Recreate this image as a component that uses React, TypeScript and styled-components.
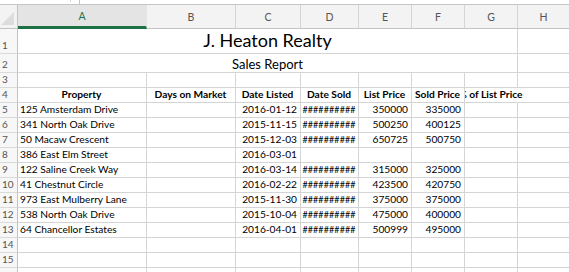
import styled, { createGlobalStyle } from 'styled-components';

const GlobalStyle = createGlobalStyle`
  html, body {
    margin: 0;
    padding: 0;
    background: #ffffff;
    overflow: hidden;
  }
  body {
    font-family: Lato, 'Liberation Sans', sans-serif;
  }
`;

const COLS = ['A', 'B', 'C', 'D', 'E', 'F', 'G', 'H'];

type Row = {
  property: string;
  listed: string;
  sold: boolean;
  listPrice: string;
  soldPrice: string;
};

const rows: Row[] = [
  { property: '125 Amsterdam Drive', listed: '2016-01-12', sold: true, listPrice: '350000', soldPrice: '335000' },
  { property: '341 North Oak Drive', listed: '2015-11-15', sold: true, listPrice: '500250', soldPrice: '400125' },
  { property: '50 Macaw Crescent', listed: '2015-12-03', sold: true, listPrice: '650725', soldPrice: '500750' },
  { property: '386 East Elm Street', listed: '2016-03-01', sold: false, listPrice: '', soldPrice: '' },
  { property: '122 Saline Creek Way', listed: '2016-03-14', sold: true, listPrice: '315000', soldPrice: '325000' },
  { property: '41 Chestnut Circle', listed: '2016-02-22', sold: true, listPrice: '423500', soldPrice: '420750' },
  { property: '973 East Mulberry Lane', listed: '2015-11-30', sold: true, listPrice: '375000', soldPrice: '375000' },
  { property: '538 North Oak Drive', listed: '2015-10-04', sold: true, listPrice: '475000', soldPrice: '400000' },
  { property: '64 Chancellor Estates', listed: '2016-04-01', sold: true, listPrice: '500999', soldPrice: '495000' },
];

function App() {
  return (
    <>
      <GlobalStyle />
      <Page>
        <FormulaStrip>
          <StripTick />
          <StripDivider />
        </FormulaStrip>
        <Sheet>
          {/* column headers */}
          <Corner>
            <CornerTriangle />
          </Corner>
          {COLS.map((c) => (
            <ColHeader key={c} $active={c === 'A'}>
              {c}
            </ColHeader>
          ))}
          <ColHeader />

          {/* row 1 */}
          <RowNum>1</RowNum>
          <Merged $size={18}>J. Heaton Realty</Merged>
          <Cell />
          <Cell />

          {/* row 2 */}
          <RowNum>2</RowNum>
          <Merged $size={13}>Sales Report</Merged>
          <Cell />
          <Cell />

          {/* row 3 */}
          <RowNum>3</RowNum>
          {COLS.map((c) => (
            <Cell key={c} />
          ))}
          <Cell />

          {/* row 4 */}
          <RowNum>4</RowNum>
          <Cell $bold $align="center">Property</Cell>
          <Cell $bold $align="center">Days on Market</Cell>
          <Cell $bold $align="center">Date Listed</Cell>
          <Cell $bold $align="center">Date Sold</Cell>
          <Cell $bold $align="center">List Price</Cell>
          <Cell $bold $align="center">Sold Price</Cell>
          <Cell $bold $align="center" $spill>
            % of List Price
          </Cell>
          <Cell />
          <Cell />

          {rows.map((r, i) => (
            <DataRow key={r.property} n={i + 5} row={r} />
          ))}

          {[14, 15].map((n) => (
            <Blank key={n} n={String(n)} />
          ))}
          <Blank n="" />
        </Sheet>
      </Page>
    </>
  );
}

function DataRow({ n, row }: { n: number; row: Row }) {
  return (
    <>
      <RowNum>{n}</RowNum>
      <Cell $align="left">{row.property}</Cell>
      <Cell />
      <Cell $align="right">{row.listed}</Cell>
      <Cell $align="center" $hash>
        {row.sold ? '##########' : ''}
      </Cell>
      <Cell $align="right">{row.listPrice}</Cell>
      <Cell $align="right">{row.soldPrice}</Cell>
      <Cell />
      <Cell />
      <Cell />
    </>
  );
}

function Blank({ n }: { n: string }) {
  return (
    <>
      <RowNum>{n}</RowNum>
      {COLS.map((c) => (
        <Cell key={c} />
      ))}
      <Cell />
    </>
  );
}

export default App;

const Page = styled.div`
  width: 569px;
  height: 272px;
  overflow: hidden;
  background: #ffffff;
`;

const FormulaStrip = styled.div`
  position: relative;
  height: 4px;
  border-bottom: 1px solid #c6c6c6;
  background: #ffffff;
`;

const StripDivider = styled.div`
  position: absolute;
  left: 79px;
  top: 0;
  width: 1px;
  height: 4px;
  background: #c6c6c6;
`;

const StripTick = styled.div`
  position: absolute;
  left: 70px;
  top: 0;
  width: 1px;
  height: 2px;
  background: #d8d8d8;
`;

const Sheet = styled.div`
  display: grid;
  grid-template-columns: 18px 129px 89px 65px 58px 53px 53px 53px 52px 40px;
  grid-template-rows: 24px 25px 19px 15px repeat(13, 15px);
  width: 610px;
`;

const Corner = styled.div`
  position: relative;
  background: #f3f3f3;
  border-right: 1px solid #c2c2c2;
  border-bottom: 1px solid #c2c2c2;
`;

const CornerTriangle = styled.div`
  position: absolute;
  right: 3px;
  bottom: 3px;
  width: 0;
  height: 0;
  border-left: 13px solid transparent;
  border-bottom: 13px solid #dcdcdc;
`;

const ColHeader = styled.div<{ $active?: boolean }>`
  display: flex;
  align-items: center;
  justify-content: center;
  box-sizing: border-box;
  padding-top: 1px;
  font-family: Lato, 'Liberation Sans', sans-serif;
  font-size: 10.5px;
  color: ${(p) => (p.$active ? '#217346' : '#555555')};
  background: ${(p) => (p.$active ? '#e4e4e4' : '#f3f3f3')};
  border-right: 1px solid ${(p) => (p.$active ? '#e4e4e4' : '#d5d5d5')};
  border-bottom: ${(p) => (p.$active ? '3px solid #1e7145' : '1px solid #c2c2c2')};
`;

const RowNum = styled.div`
  display: flex;
  align-items: flex-end;
  padding-left: 2px;
  padding-bottom: 1px;
  box-sizing: border-box;
  font-family: Lato, 'Liberation Sans', sans-serif;
  font-size: 10px;
  line-height: 13px;
  color: #555555;
  background: #f7f7f7;
  border-right: 1px solid #c2c2c2;
  border-bottom: 1px solid #dadada;
`;

const Merged = styled.div<{ $size: number }>`
  grid-column: span 7;
  display: flex;
  align-items: flex-end;
  justify-content: center;
  box-sizing: border-box;
  padding-bottom: ${(p) => (p.$size > 14 ? 2 : 1)}px;
  font-family: Lato, 'Liberation Sans', sans-serif;
  font-size: ${(p) => p.$size}px;
  line-height: 1.1;
  color: #000000;
  border-right: 1px solid #d4d4d4;
  border-bottom: 1px solid #d4d4d4;
`;

const Cell = styled.div<{
  $align?: 'left' | 'center' | 'right';
  $bold?: boolean;
  $hash?: boolean;
  $spill?: boolean;
}>`
  display: flex;
  align-items: flex-end;
  justify-content: ${(p) =>
    p.$align === 'right' ? 'flex-end' : p.$align === 'center' ? 'center' : 'flex-start'};
  box-sizing: border-box;
  min-width: 0;
  padding: 0 3px 1px 2px;
  white-space: nowrap;
  overflow: ${(p) => (p.$spill ? 'visible' : 'hidden')};
  clip-path: ${(p) => (p.$spill ? 'inset(-2px -200px -2px 0)' : 'none')};
  position: relative;
  z-index: ${(p) => (p.$spill ? 1 : 0)};
  font-family: Lato, 'Liberation Sans', sans-serif;
  font-size: ${(p) => (p.$hash ? '9px' : '10.2px')};
  letter-spacing: ${(p) => (p.$hash ? '0.1px' : '0')};
  font-weight: ${(p) => (p.$bold ? 700 : 400)};
  line-height: 13px;
  color: #000000;
  border-right: 1px solid ${(p) => (p.$spill ? 'transparent' : '#d4d4d4')};
  border-bottom: 1px solid #d4d4d4;
`;
